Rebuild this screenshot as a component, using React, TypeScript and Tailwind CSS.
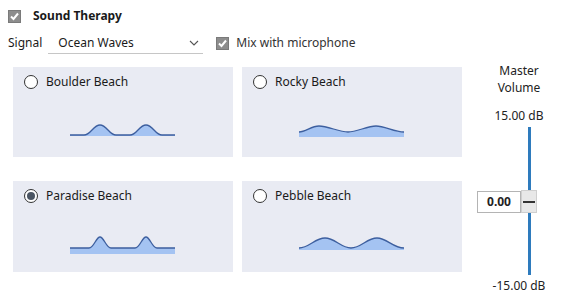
import React from "react";

type Beach = { name: string; selected: boolean; wave: "boulder" | "rocky" | "paradise" | "pebble" };

const beaches: Beach[] = [
  { name: "Boulder Beach", selected: false, wave: "boulder" },
  { name: "Rocky Beach", selected: false, wave: "rocky" },
  { name: "Paradise Beach", selected: true, wave: "paradise" },
  { name: "Pebble Beach", selected: false, wave: "pebble" },
];

// wave outlines, drawn in a 106x22 box
const waves = {
  boulder: {
    line: "M0 15 L14 15 C21 15 23 5 30 5 C37 5 39 15 46 15 L60 15 C67 15 69 5 76 5 C83 5 85 15 92 15 L105 15",
    bottom: 16,
  },
  rocky: {
    line: "M0 12 C7 12 12 6 20 6 C29 6 40 12 49 12 C58 12 68 6 77 6 C86 6 95 12 105 12",
    bottom: 17,
  },
  paradise: {
    line: "M0 14 L19 14 C24 14 26 3 30 3 C34 3 36 14 41 14 L65 14 C70 14 72 3 76 3 C80 3 82 14 87 14 L105 14",
    bottom: 20,
  },
  pebble: {
    line: "M0 14 C10 14 16 4 26 4 C36 4 42 14 52 14 C62 14 68 4 78 4 C88 4 94 14 105 14",
    bottom: 16,
  },
};

function Wave({ kind }: { kind: Beach["wave"] }) {
  const w = waves[kind];
  return (
    <svg width="106" height="22" viewBox="0 0 106 22">
      <path d={`${w.line} L105 ${w.bottom} L0 ${w.bottom} Z`} fill="#a4c3f2" />
      <path d={w.line} fill="none" stroke="#3d5f9f" strokeWidth="1.3" />
    </svg>
  );
}

function CheckBox() {
  return (
    <div className="w-[13px] h-[13px] bg-[#8d8d8d] border border-[#7a7a7a] flex items-center justify-center">
      <svg width="11" height="11" viewBox="0 0 11 11">
        <path d="M2 5.5 L4.5 8 L9 2.5" fill="none" stroke="white" strokeWidth="2" />
      </svg>
    </div>
  );
}

export default function App() {
  return (
    <div
      className="w-[563px] h-[298px] bg-white text-[#1a1a1a] text-[12px] overflow-hidden"
      style={{ fontFamily: '"Noto Sans", "Open Sans", sans-serif' }}
    >
      {/* header */}
      <div className="flex items-center h-[20px] mt-[6px] pl-[8px]">
        <CheckBox />
        <span className="ml-[12px] font-bold">Sound Therapy</span>
      </div>

      {/* signal row */}
      <div className="flex items-center h-[22px] mt-[6px] pl-[8px]">
        <span>Signal</span>
        <div className="ml-[6px] w-[155px] h-[22px] flex items-center justify-between pl-[10px] pr-[3px] border-b border-[#c6c6c6]">
          <span>Ocean Waves</span>
          <svg width="12" height="8" viewBox="0 0 12 8">
            <path d="M2 2 L6 6 L10 2" fill="none" stroke="#555" strokeWidth="1.1" />
          </svg>
        </div>
        <div className="ml-[13px] flex items-center">
          <CheckBox />
          <span className="ml-[7px] text-[#333]">Mix with microphone</span>
        </div>
      </div>

      <div className="flex mt-[13px] pl-[13px]">
        {/* beach grid */}
        <div className="grid grid-cols-[220px_220px] grid-rows-[90px_91px] gap-x-[9px] gap-y-[24px]">
          {beaches.map((b) => (
            <div key={b.name} className="bg-[#e9ebf3] flex flex-col">
              <div className="flex items-center mt-[7px] ml-[11px] h-[16px]">
                <div className="w-[14px] h-[14px] rounded-full border border-[#333] bg-white flex items-center justify-center">
                  {b.selected && <div className="w-[8px] h-[8px] rounded-full bg-[#4b5563]" />}
                </div>
                <span className="ml-[8px]">{b.name}</span>
              </div>
              <div className="flex justify-center mt-[30px]">
                <Wave kind={b.wave} />
              </div>
            </div>
          ))}
        </div>

        {/* master volume */}
        <div className="flex flex-col items-center w-[88px] ml-[13px] -mt-[5px] leading-[17px] text-[#222]">
          <span>Master</span>
          <span>Volume</span>
          <span className="mt-[11px]">15.00 dB</span>
          <div className="relative w-full h-[148px] mt-[3px]">
            <div className="absolute left-[53px] top-0 bottom-0 w-[3px] bg-[#2e7bbd]" />
            <div className="absolute left-[2px] top-[63px] flex items-center">
              <div className="w-[44px] h-[22px] border border-[#b4b4b4] bg-white flex items-center justify-center font-bold">
                0.00
              </div>
              <div className="w-[16px] h-[23px] bg-[#e8e8e8] border border-[#cfcfcf] flex items-center justify-center">
                <div className="w-[12px] h-[2px] bg-[#333]" />
              </div>
            </div>
          </div>
          <span className="mt-[2px]">-15.00 dB</span>
        </div>
      </div>
    </div>
  );
}
